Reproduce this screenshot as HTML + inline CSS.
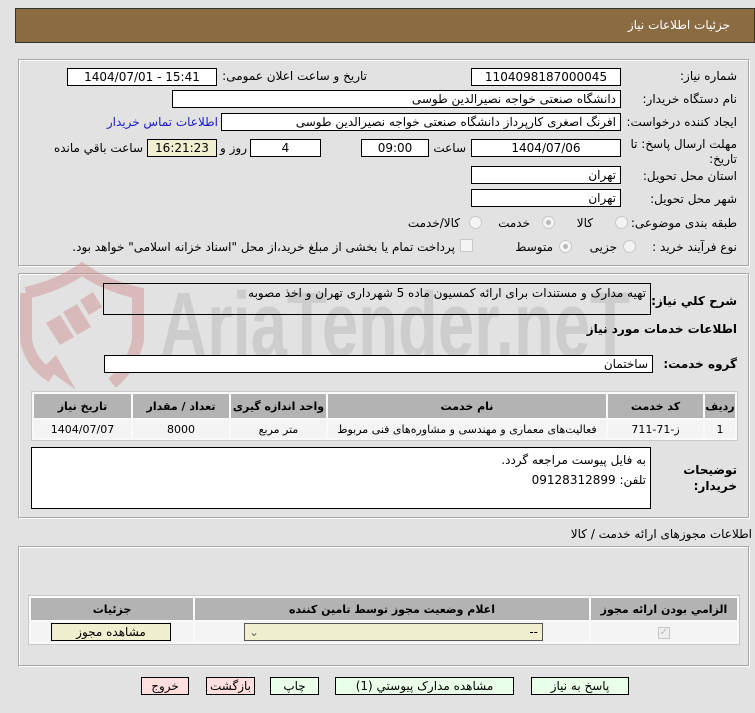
<!DOCTYPE html>
<html><head><meta charset="utf-8">
<style>
*{margin:0;padding:0;box-sizing:border-box}
body{width:755px;height:713px;background:#e2e2e2;font-family:"DejaVu Sans",sans-serif;font-size:12px;color:#000;position:relative;overflow:hidden}
.a{position:absolute;white-space:nowrap}
.in{position:absolute;background:#fff;border:1px solid #000;height:18px;line-height:16px;padding:0 4px;direction:rtl;white-space:nowrap;overflow:hidden}
.c{text-align:center}
.l{direction:rtl;text-align:right}
.panel{position:absolute;border:1px solid #a8a8a8;border-right-color:#fff;border-bottom-color:#fff;box-shadow:inset -1px -1px 0 #a8a8a8,inset 1px 1px 0 #fff}
.rad{position:absolute;width:13px;height:13px;border-radius:50%;border:1px solid #c8c8c8;background:#f4f4f4}
.rad.on::after{content:"";position:absolute;left:3px;top:3px;width:5px;height:5px;border-radius:50%;background:#bbb}
table{border-collapse:separate;border-spacing:2px;position:absolute;background:#fafafa;border:1px solid #c8c8c8;table-layout:fixed}
td,th{font-size:11px;text-align:center;direction:rtl;white-space:nowrap;overflow:hidden}
th{background:#b3b3b3;font-weight:bold}
td{background:#f4f4f4}
.btn{position:absolute;height:18px;border:1px solid #000;line-height:16px;text-align:center;direction:rtl;font-size:12px}
</style></head><body>
<div class="a" style="left:15px;top:8px;width:740px;height:35px;background:#8b6b42;border:1px solid #333"></div>
<div class="a l" style="right:25px;top:18px;color:#fff;font-size:12px">جزئیات اطلاعات نیاز</div>

<div class="panel" style="left:18px;top:59px;width:732px;height:208px"></div>

<div class="a l" style="right:18px;top:69px">شماره نیاز:</div>
<div class="in c" style="left:471px;top:68px;width:150px">1104098187000045</div>
<div class="a l" style="right:388px;top:69px">تاريخ و ساعت اعلان عمومی:</div>
<div class="in c" style="left:67px;top:68px;width:150px;direction:ltr">1404/07/01 - 15:41</div>

<div class="a l" style="right:18px;top:92px">نام دستگاه خريدار:</div>
<div class="in" style="left:172px;top:90px;width:449px">دانشگاه صنعتی خواجه نصیرالدین طوسی</div>

<div class="a l" style="right:18px;top:115px">ایجاد کننده درخواست:</div>
<div class="in" style="left:221px;top:113px;width:400px">افرنگ اصغری کارپرداز دانشگاه صنعتی خواجه نصیرالدین طوسی</div>
<div class="a l" style="right:537px;top:115px;color:#1a1acc">اطلاعات تماس خریدار</div>

<div class="a l" style="right:18px;top:137px;line-height:15px">مهلت ارسال پاسخ: تا<br>تاریخ:</div>
<div class="in c" style="left:471px;top:139px;width:150px">1404/07/06</div>
<div class="a l" style="right:289px;top:141px">ساعت</div>
<div class="in c" style="left:361px;top:139px;width:68px">09:00</div>
<div class="in c" style="left:250px;top:139px;width:71px">4</div>
<div class="a l" style="right:508px;top:141px">روز و</div>
<div class="in c" style="left:147px;top:139px;width:70px;background:#f0efd0">16:21:23</div>
<div class="a l" style="right:612px;top:141px">ساعت باقي مانده</div>

<div class="a l" style="right:18px;top:169px">استان محل تحویل:</div>
<div class="in" style="left:471px;top:166px;width:150px">تهران</div>
<div class="a l" style="right:18px;top:192px">شهر محل تحویل:</div>
<div class="in" style="left:471px;top:189px;width:150px">تهران</div>

<div class="a l" style="right:18px;top:216px">طبقه بندی موضوعی:</div>
<div class="rad" style="left:615px;top:216px"></div>
<div class="a l" style="right:162px;top:216px">کالا</div>
<div class="rad on" style="left:542px;top:216px"></div>
<div class="a l" style="right:225px;top:216px">خدمت</div>
<div class="rad" style="left:469px;top:216px"></div>
<div class="a l" style="right:295px;top:216px">کالا/خدمت</div>

<div class="a l" style="right:18px;top:240px">نوع فرآیند خرید :</div>
<div class="rad" style="left:623px;top:240px"></div>
<div class="a l" style="right:138px;top:240px">جزیی</div>
<div class="rad on" style="left:559px;top:240px"></div>
<div class="a l" style="right:202px;top:240px">متوسط</div>
<div class="a" style="left:460px;top:239px;width:13px;height:13px;border:1px solid #c8c8c8;background:#f4f4f4"></div>
<div class="a l" style="right:300px;top:240px">پرداخت تمام یا بخشی از مبلغ خرید،از محل "اسناد خزانه اسلامی" خواهد بود.</div>

<div class="panel" style="left:18px;top:273px;width:732px;height:246px"></div>

<svg class="a" style="left:0;top:255px" width="700" height="140">
<g opacity="0.45">
<path d="M26 38 Q60 30 82 14 Q104 30 138 38 L138 85 Q132 112 112 128" fill="none" stroke="#d08a8a" stroke-width="12"/>
<path d="M26 38 L26 85 Q30 108 52 122" fill="none" stroke="#d08a8a" stroke-width="12"/>
<path d="M44 112 L76 135 L56 100 Z" fill="#d08a8a"/>
<path d="M46 68 L60 60 L74 82 L60 90 Z M63 57 L77 49 L91 72 L77 80 Z M80 45 L93 37 L102 52 L89 60 Z" fill="#d08a8a"/>
</g>
<text x="160" y="101" font-family="Liberation Sans Narrow, Liberation Sans, sans-serif" font-weight="bold" font-size="92" fill="#cdcdcd" textLength="470" lengthAdjust="spacingAndGlyphs">AriaTender.neT</text>
</svg>

<div class="a l" style="right:18px;top:294px;font-weight:bold;font-size:12px">شرح کلي نیاز:</div>
<div class="in" style="left:103px;top:283px;width:548px;height:32px;background:transparent;line-height:18px">تهیه مدارک و مستندات برای ارائه کمسیون ماده 5 شهرداری تهران و اخذ مصوبه</div>
<div class="a l" style="right:18px;top:322px;font-weight:bold;font-size:12px">اطلاعات خدمات مورد نیاز</div>
<div class="a l" style="right:18px;top:357px;font-weight:bold;font-size:12px">گروه خدمت:</div>
<div class="in" style="left:104px;top:355px;width:549px;height:18px;background:#fff">ساختمان</div>

<table style="left:31px;top:391px;width:707px;height:50px">
<colgroup><col style="width:97px"><col style="width:96px"><col style="width:95px"><col><col style="width:95px"><col style="width:30px"></colgroup>
<tr style="height:24px"><th>تاريخ نیاز</th><th>تعداد / مقدار</th><th>واحد اندازه گیری</th><th>نام خدمت</th><th>کد خدمت</th><th>ردیف</th></tr>
<tr><td>1404/07/07</td><td>8000</td><td>متر مربع</td><td>فعالیت‌های معماری و مهندسی و مشاوره‌های فنی مربوط</td><td>ز-71-711</td><td>1</td></tr>
</table>

<div class="a l" style="right:18px;top:462px;font-weight:bold;font-size:12px;line-height:16px">توضیحات<br>خریدار:</div>
<div class="in" style="left:31px;top:447px;width:620px;height:62px;white-space:normal;line-height:20px;padding-top:2px">به فایل پیوست مراجعه گردد.<br>تلفن: 09128312899</div>

<div class="a l" style="right:3px;top:527px">اطلاعات مجوزهای ارائه خدمت / کالا</div>
<div class="panel" style="left:18px;top:546px;width:732px;height:121px"></div>
<table style="left:28px;top:595px;width:712px;height:50px">
<colgroup><col style="width:162px"><col><col style="width:146px"></colgroup>
<tr style="height:22px"><th>جزئیات</th><th>اعلام وضعیت مجوز توسط تامین کننده</th><th>الزامي بودن ارائه مجوز</th></tr>
<tr><td></td><td></td><td><span style="display:inline-block;width:12px;height:12px;border:1px solid #c8c8c8;background:#eee;color:#bbb;font-size:10px;line-height:10px">✓</span></td></tr>
</table>
<div class="btn" style="left:51px;top:623px;width:120px;background:#f0efd0">مشاهده مجوز</div>
<div class="btn" style="left:244px;top:623px;width:299px;background:#f0efd0;border-color:#555;text-align:left;padding:0 4px;direction:ltr"><span style="color:#666">⌄</span><span style="float:right">--</span></div>

<div class="btn" style="left:531px;top:677px;width:98px;background:#eaffea">پاسخ به نیاز</div>
<div class="btn" style="left:335px;top:677px;width:179px;background:#eaffea">مشاهده مدارک پیوستي (1)</div>
<div class="btn" style="left:270px;top:677px;width:49px;background:#eaffea">چاپ</div>
<div class="btn" style="left:206px;top:677px;width:49px;background:#ffdede">بازگشت</div>
<div class="btn" style="left:141px;top:677px;width:48px;background:#ffdede">خروج</div>
</body></html>
